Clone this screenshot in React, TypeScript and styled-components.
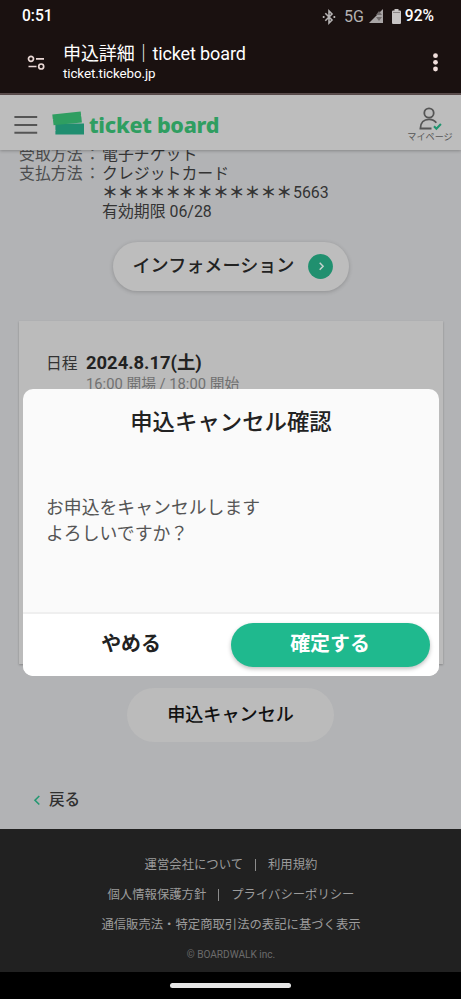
import React from "react";
import styled, { createGlobalStyle, css } from "styled-components";

const GlobalStyle = createGlobalStyle`
  * { box-sizing: border-box; }
  body {
    margin: 0;
    background: #000;
    font-family: Roboto, "Noto Sans CJK JP", sans-serif;
  }
`;

const Screen = styled.div`
  position: relative;
  width: 461px;
  height: 999px;
  overflow: hidden;
  display: flex;
  flex-direction: column;
`;

const BrowserChrome = styled.div`
  height: 95px;
  flex: none;
  background: #1a1110;
  border-bottom: 2px solid #5c4e4e;
  color: #fff;
`;

const StatusBar = styled.div`
  display: flex;
  align-items: center;
  height: 32px;
  padding: 1px 27px 0 22px;
  font-size: 15.6px;
  font-weight: 500;
  line-height: 31px;
`;

const StatusIcons = styled.div`
  display: flex;
  align-items: center;
  margin-left: auto;
  color: #b5b2b2;
`;

const Network = styled.span`
  margin: 0 5px 0 8px;
  font-weight: 400;
  font-size: 16px;
`;

const BatterySlot = styled.span`
  display: flex;
  margin-left: 8px;
`;

const Battery = styled.span`
  margin-left: 4px;
  color: #fff;
  font-size: 15.6px;
`;

const AddressBar = styled.div`
  display: flex;
  align-items: center;
  height: 61px;
  padding: 0 22px 0 27px;
`;

const Address = styled.div`
  flex: 1;
  margin: 1px 0 0 17px;
`;

const PageTitle = styled.div`
  height: 22px;
  font-size: 18px;
  line-height: 22px;
  letter-spacing: -0.12px;
  white-space: nowrap;
`;

const Url = styled.div`
  height: 18px;
  font-size: 13.4px;
  line-height: 18px;
  letter-spacing: -0.1px;
`;

const SiteHeader = styled.header`
  position: relative;
  z-index: 1;
  display: flex;
  flex: none;
  align-items: center;
  height: 55px;
  padding: 0 8px 0 14px;
  background: #bdbdbd;
  box-shadow: 0 1px 3px rgba(0, 0, 0, 0.25);
`;

const MenuSlot = styled.span`
  display: flex;
  margin-top: 4px;
`;

const Logo = styled.div`
  display: flex;
  align-items: center;
  margin-left: 14px;
  color: #2f9e61;
`;

const LogoText = styled.span`
  margin: 4px 0 0 4px;
  font: 800 21.6px/30px "Noto Sans", sans-serif;
  letter-spacing: -0.28px;
  white-space: nowrap;
`;

const MyPage = styled.div`
  display: flex;
  flex-direction: column;
  align-items: center;
  width: 46px;
  margin: 5px 0 0 auto;
  color: #555;
  font-size: 9.1px;
  line-height: 13px;
  white-space: nowrap;
`;

const Content = styled.main`
  display: flex;
  flex-direction: column;
  flex: none;
  height: 679px;
  overflow: hidden;
  background: #b2b3b5;
`;

const Details = styled.dl`
  display: grid;
  grid-template-columns: 64px 19px 1fr;
  grid-auto-rows: 19px;
  margin: -5px 0 0 19px;
  font-size: 15.9px;
  line-height: 19px;
  color: #343434;
  white-space: nowrap;
`;

const Term = styled.dt`
  color: #4c4d4e;
`;

const Colon = styled.span`
  justify-self: center;
  color: #4c4d4e;
`;

const Value = styled.dd`
  grid-column: 3;
  margin: 0;
`;

const Masked = styled.span`
  display: inline-block;
  width: 191px;
  font-weight: 700;
  letter-spacing: -0.05px;
`;

const InfoButton = styled.button`
  display: flex;
  align-items: center;
  align-self: center;
  flex: none;
  width: 236px;
  height: 49px;
  margin: 21px 0 0;
  padding: 0 16px 1px 20px;
  justify-content: space-between;
  border: 0;
  border-radius: 25px;
  background: #bdbdbd;
  box-shadow: 0 1px 4px rgba(0, 0, 0, 0.2);
  color: #222;
  font: 500 18.1px/26px Roboto, "Noto Sans CJK JP", sans-serif;
  white-space: nowrap;
`;

const Card = styled.section`
  flex: none;
  width: 424px;
  height: 343px;
  margin: 30px 0 0 19px;
  padding: 30px 27px;
  background: #bbb;
  box-shadow: 0 1px 2px rgba(0, 0, 0, 0.25);
`;

const Schedule = styled.div`
  display: grid;
  grid-template-columns: 40px 1fr;
  grid-auto-rows: 23px;
  color: #333;
  font-size: 15.8px;
  line-height: 25px;
`;

const DateText = styled.strong`
  font-size: 18.4px;
  font-weight: 700;
  line-height: 23px;
  color: #222;
`;

const Hours = styled.span`
  grid-column: 2;
  color: #717171;
  font-size: 14.75px;
  line-height: 21px;
`;

const CancelButton = styled.button`
  flex: none;
  align-self: center;
  width: 207px;
  height: 54px;
  margin: 24px 0 0;
  border: 0;
  border-radius: 27px;
  background: #bbb;
  color: #111;
  font: 500 18.1px/26px Roboto, "Noto Sans CJK JP", sans-serif;
`;

const Back = styled.div`
  display: flex;
  align-items: center;
  gap: 8px;
  margin: 46px 0 0 33px;
  color: #303030;
  font-size: 15.6px;
  font-weight: 500;
  line-height: 24px;
`;

const Footer = styled.footer`
  display: flex;
  flex: none;
  flex-direction: column;
  align-items: center;
  height: 143px;
  padding: 21px 0 0 1px;
  background: #212121;
  color: #9c9c9c;
  font-size: 12.35px;
  line-height: 30px;
`;

const FooterLinks = styled.div`
  display: flex;
  align-items: center;
  height: 30px;
  white-space: nowrap;
`;

const Divider = styled.i`
  width: 1px;
  height: 12px;
  margin: 0 12px;
  background: #8c8c8c;
`;

const Copyright = styled.small`
  color: #6c6c6c;
  font-size: 10.1px;
`;

const NavigationBar = styled.div`
  display: flex;
  align-items: center;
  justify-content: center;
  flex: none;
  height: 27px;
  background: #000;
`;

const HomeHandle = styled.div`
  width: 121px;
  height: 5px;
  border-radius: 3px;
  background: #e6e6e6;
`;

const Dialog = styled.div`
  position: absolute;
  z-index: 2;
  left: 23px;
  top: 389px;
  display: flex;
  flex-direction: column;
  width: 416px;
  height: 287px;
  overflow: hidden;
  border-radius: 10px;
  background: #fafafa;
`;

const DialogTitle = styled.h2`
  margin: 17px 0 0;
  color: #222;
  font-size: 22.4px;
  font-weight: 500;
  line-height: 32px;
  text-align: center;
`;

const DialogMessage = styled.p`
  margin: 57px 0 0 23px;
  color: #555;
  font-size: 17.85px;
  line-height: 25.5px;
`;

const DialogActions = styled.div`
  display: flex;
  height: 64px;
  margin-top: auto;
  padding: 9px 9px 0 9px;
  border-top: 2px solid #efefef;
  background: #fff;
`;

const ActionButton = styled.button<{ $primary?: boolean }>`
  width: 199px;
  height: 44px;
  padding: 0 1px 0 0;
  border: 0;
  border-radius: 23px;
  background: transparent;
  color: #222;
  font: 700 19.9px/28px Roboto, "Noto Sans CJK JP", sans-serif;
  ${(p) =>
    p.$primary &&
    css`
      background: #1fb98e;
      color: #fff;
      box-shadow: 0 2px 4px rgba(0, 0, 0, 0.25);
    `}
`;

const BluetoothIcon = () => (
  <svg width="14" height="16" viewBox="0 0 14 16" fill="none" stroke="currentColor" strokeWidth="1.6">
    <path d="M3.300 4.200 10 11 7 14V2l3 3-6.700 6.800" />
    <path d="M.8 8h1.700M11.500 8h1.700" strokeWidth="1.800" />
  </svg>
);

const SignalIcon = () => (
  <svg width="15" height="15" viewBox="0 0 15 15">
    <path d="M14 0v14H0z" fill="#a9a6a6" />
    <path d="M10 2 13 6H7zM7 8h6l-3 4z" fill="#716c6c" />
  </svg>
);

const BatteryIcon = () => (
  <svg width="9" height="15" viewBox="0 0 9 15">
    <path d="M2.500 0h4v1.500h1.200c.7 0 1.300.5 1.300 1.200v11c0 .7-.6 1.300-1.300 1.300H1.300C.6 15 0 14.400 0 13.700v-11c0-.7.6-1.200 1.300-1.200h1.200z" fill="#c7c4c4" />
    <path d="M1 3.500h7" stroke="#8b8686" />
  </svg>
);

const TuneIcon = () => (
  <svg width="19" height="16" viewBox="0 0 19 16" fill="none" stroke="#ead8d5" strokeWidth="1.7">
    <circle cx="4" cy="3.800" r="2.500" />
    <path d="M9 3.800h8M1.500 11.500h8" />
    <circle cx="14.200" cy="11.500" r="2.500" />
  </svg>
);

const MoreIcon = () => (
  <svg width="7" height="20" viewBox="0 0 7 20" fill="#f1dfdc">
    <circle cx="3.500" cy="2.700" r="2.400" />
    <circle cx="3.500" cy="9.300" r="2.400" />
    <circle cx="3.500" cy="16" r="2.400" />
  </svg>
);

const MenuIcon = () => (
  <svg width="24" height="20" viewBox="0 0 24 20" stroke="#555" strokeWidth="2">
    <path d="M.4 2h22.800M.4 10h22.800M.4 17.800h22.800" />
  </svg>
);

const TicketsIcon = () => (
  <svg width="33" height="24" viewBox="0 0 33 24">
    <path d="M3.400 12.500H32v11H3.400v-3.700l.5-.5-.5-.5z" fill="#208e70" />
    <path d="M.3 3.600 28.700.5 29.100 4.300 28.700 4.900 29.300 5.400 29.900 11.500 3.500 14 1.600 14.300 1 9.300 1.400 8.700.8 8.200z" fill="#2f9e61" />
  </svg>
);

const UserIcon = () => (
  <svg width="24" height="24" viewBox="0 0 24 24" fill="none" stroke="#555" strokeWidth="1.800">
    <circle cx="11" cy="6" r="4.700" />
    <path d="M13.500 21.500H2.400c0-6 3.700-9.200 8.600-9.200 3.200 0 5.600 1 7.300 3.500" />
    <path d="m16 19.200 2.400 2.500 4.500-4.700" stroke="#20946f" strokeWidth="2.100" />
  </svg>
);

const RoundArrowIcon = () => (
  <svg width="25" height="25" viewBox="0 0 25 25" fill="none">
    <circle cx="12.500" cy="12.500" r="12.400" fill="#20906f" />
    <path d="m11.700 8.800 3.400 3.500-3.400 3.500" stroke="#c6d2ce" strokeWidth="1.500" />
  </svg>
);

const BackIcon = () => (
  <svg width="8" height="12" viewBox="0 0 8 12" fill="none" stroke="#249872" strokeWidth="1.600">
    <path d="M6.300 2 2 6.300 6.300 10.500" />
  </svg>
);

export default function App() {
  return (
    <>
      <GlobalStyle />
      <Screen>
        <BrowserChrome>
          <StatusBar>
            0:51
            <StatusIcons>
              <BluetoothIcon />
              <Network>5G</Network>
              <SignalIcon />
              <BatterySlot>
                <BatteryIcon />
              </BatterySlot>
              <Battery>92%</Battery>
            </StatusIcons>
          </StatusBar>
          <AddressBar>
            <TuneIcon />
            <Address>
              <PageTitle>申込詳細｜ticket board</PageTitle>
              <Url>ticket.tickebo.jp</Url>
            </Address>
            <MoreIcon />
          </AddressBar>
        </BrowserChrome>

        <SiteHeader>
          <MenuSlot>
            <MenuIcon />
          </MenuSlot>
          <Logo>
            <TicketsIcon />
            <LogoText>ticket board</LogoText>
          </Logo>
          <MyPage>
            <UserIcon />
            マイページ
          </MyPage>
        </SiteHeader>

        <Content>
          <Details>
            <Term>受取方法</Term>
            <Colon>：</Colon>
            <Value>電子チケット</Value>
            <Term>支払方法</Term>
            <Colon>：</Colon>
            <Value>クレジットカード</Value>
            <Value><Masked>＊＊＊＊＊＊＊＊＊＊＊＊</Masked>5663</Value>
            <Value>有効期限 06/28</Value>
          </Details>
          <InfoButton>
            インフォメーション
            <RoundArrowIcon />
          </InfoButton>
          <Card>
            <Schedule>
              <span>日程</span>
              <DateText>2024.8.17(土)</DateText>
              <Hours>16:00 開場 / 18:00 開始</Hours>
            </Schedule>
          </Card>
          <CancelButton>申込キャンセル</CancelButton>
          <Back>
            <BackIcon />
            戻る
          </Back>
        </Content>

        <Footer>
          <FooterLinks>運営会社について<Divider />利用規約</FooterLinks>
          <FooterLinks>個人情報保護方針<Divider />プライバシーポリシー</FooterLinks>
          <FooterLinks>通信販売法・特定商取引法の表記に基づく表示</FooterLinks>
          <Copyright>© BOARDWALK inc.</Copyright>
        </Footer>
        <NavigationBar>
          <HomeHandle />
        </NavigationBar>

        <Dialog role="dialog">
          <DialogTitle>申込キャンセル確認</DialogTitle>
          <DialogMessage>
            お申込をキャンセルします
            <br />
            よろしいですか？
          </DialogMessage>
          <DialogActions>
            <ActionButton>やめる</ActionButton>
            <ActionButton $primary>確定する</ActionButton>
          </DialogActions>
        </Dialog>
      </Screen>
    </>
  );
}
